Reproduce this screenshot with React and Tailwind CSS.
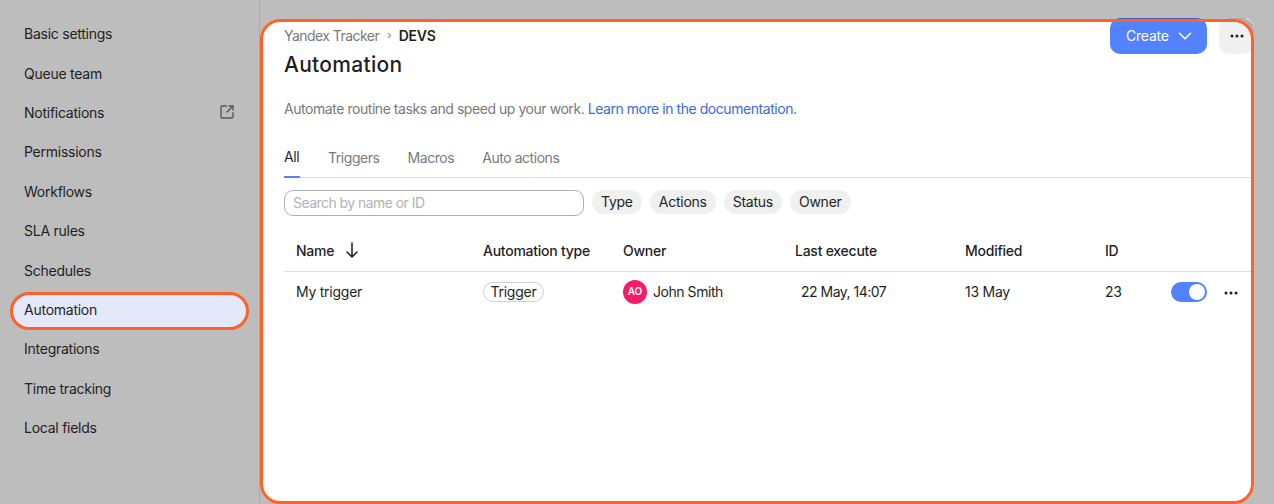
import { ChevronDown, SquareArrowOutUpRight } from 'lucide-react';

const navItems = ['Basic settings', 'Queue team', 'Notifications', 'Permissions', 'Workflows', 'SLA rules', 'Schedules', 'Automation', 'Integrations', 'Time tracking', 'Local fields'];
const tabs = ['All', 'Triggers', 'Macros', 'Auto actions'];
const filters = ['Type', 'Actions', 'Status', 'Owner'];
const columns = 'grid-cols-[187px_140px_172px_170px_140px_1fr]';

function Dots({ className }) {
  return (
    <svg className={className} width="14" height="4" viewBox="0 0 14 4" fill="currentColor">
      <circle cx="2" cy="2" r="1.5" />
      <circle cx="7" cy="2" r="1.5" />
      <circle cx="12" cy="2" r="1.5" />
    </svg>
  );
}

export default function App() {
  return (
    <div className="flex h-[504px] w-[1274px] overflow-hidden bg-[#bdbdbd] font-['Inter',sans-serif] text-[14px] tracking-[-0.25px] text-[#1f1f1f]">
      {/* Sidebar */}
      <aside className="w-[260px] shrink-0 border-r border-[#a8a8a8] pt-[14px]">
        {navItems.map((item) =>
          item === 'Automation' ? (
            <div key={item} className="relative flex h-[39.4px] items-center pl-6">
              <div className="absolute left-[10px] right-[10px] top-[2px] h-[38.5px] rounded-[20px] border-[3px] border-[#ff6128] bg-[#e3e9fb]" />
              <span className="relative">{item}</span>
            </div>
          ) : (
            <div key={item} className="flex h-[39.4px] items-center justify-between pl-6 pr-6">
              <span>{item}</span>
              {item === 'Notifications' && <SquareArrowOutUpRight size={16} strokeWidth={2} className="text-[#555555]" />}
            </div>
          )
        )}
      </aside>

      {/* Main panel */}
      <main className="relative mr-[20px] mt-[19px] flex-1 rounded-[20px] bg-white">
        {/* dimmed bit of the "more" button outside the panel corner */}
        <svg className="absolute right-0 top-0 z-[5]" width="20" height="20" viewBox="0 0 20 20">
          <path d="M0 0H10A10 10 0 0 1 20 10V20A20 20 0 0 0 0 0Z" fill="#adadad" />
        </svg>
        <div className="absolute inset-0 z-10 rounded-[20px] border-[3px] border-[#ff6128]" />
        <div className="flex items-start justify-between pl-6">
          <div className="pt-[9px]">
            <div className="flex h-[15px] items-center tracking-[-0.55px] text-[#7a7a7a]">
              <span>Yandex Tracker</span>
              <span className="mx-2 text-[11px]">›</span>
              <span className="font-semibold tracking-[-0.3px] text-[#1f1f1f]">DEVS</span>
            </div>
            <h1 className="mt-[10px] text-[21px] font-medium leading-[24px] tracking-[0.3px]">Automation</h1>
          </div>
          <div className="-mt-px flex gap-3">
            <button className="relative flex h-9 w-[97px] items-center rounded-[10px] bg-[#5282ff] pb-px pl-4 tracking-[-0.2px] text-white">
              <span className="absolute left-2 right-2 top-0 h-px bg-[#3d62bf]" />
              Create
              <ChevronDown size={22} strokeWidth={1.8} className="ml-[5px]" />
            </button>
            <button className="relative flex h-9 w-[35px] items-center justify-center rounded-[10px] bg-[#f0f0f0]">
              <span className="absolute left-2 right-2 top-0 h-px bg-[#adadad]" />
              <Dots />
            </button>
          </div>
        </div>

        <p className="mt-[22px] pl-6 leading-5 tracking-[-0.45px] text-[#7a7a7a]">
          Automate routine tasks and speed up your work. <span className="text-[#3a6bd6]">Learn more in the documentation.</span>
        </p>

        {/* Tabs */}
        <div className="ml-6 mr-[2px] mt-[20px] flex h-[39px] gap-7 border-b border-[#dddddd] tracking-[-0.45px]">
          {tabs.map((tab, i) => (
            <div key={tab} className={i === 0 ? '-mb-px flex h-[39px] w-4 items-center border-b-2 border-[#5282ff] pb-[2px]' : 'flex h-[38px] items-center pb-[2px] text-[#7a7a7a]'}>
              {tab}
            </div>
          ))}
        </div>

        {/* Filters */}
        <div className="ml-6 mt-[12px] flex items-start gap-2">
          <div className="flex h-[26px] w-[300px] items-center rounded-[9px] border border-[#b0b0b0] px-2 pb-[2px] tracking-[-0.55px] text-[#b3b3b3]">Search by name or ID</div>
          {filters.map((f) => (
            <div key={f} className="flex h-6 items-center rounded-full bg-[#f0f0f0] px-[9px] pb-px">{f}</div>
          ))}
        </div>

        {/* Table */}
        <div className="ml-6 mr-[2px] mt-[15px]">
          <div className={`grid h-[41px] ${columns} items-center border-b border-[#dddddd] pb-[2px] pl-3 font-medium`}>
            <div className="flex items-center gap-3">
              Name
              <svg width="12" height="16" viewBox="0 0 12 16" fill="none" stroke="currentColor" strokeWidth="1.5" strokeLinecap="round" strokeLinejoin="round">
                <path d="M6 1v14M1 10l5 5 5-5" />
              </svg>
            </div>
            <div>Automation type</div>
            <div>Owner</div>
            <div>Last execute</div>
            <div>Modified</div>
            <div>ID</div>
          </div>
          <div className={`grid h-[39px] ${columns} items-center pl-3`}>
            <div>My trigger</div>
            <div>
              <span className="inline-flex h-5 w-[61px] items-center justify-center rounded-full border border-[#d0d0d0]">Trigger</span>
            </div>
            <div className="flex items-center gap-[6px] tracking-[-0.45px]">
              <span className="flex h-6 w-6 items-center justify-center rounded-full bg-[#f91a6a] text-[10px] font-semibold tracking-normal text-white">AO</span>
              John Smith
            </div>
            <div className="pl-[6px] tracking-[-0.5px]">22 May, 14:07</div>
            <div>13 May</div>
            <div className="flex items-center">
              <span className="w-[66px]">23</span>
              <span className="mt-px flex h-5 w-9 items-center justify-end rounded-full bg-[#5282ff] pr-[2px]">
                <span className="h-4 w-4 rounded-full bg-white" />
              </span>
              <Dots className="ml-[17px] mt-[3px]" />
            </div>
          </div>
        </div>
      </main>
    </div>
  );
}
